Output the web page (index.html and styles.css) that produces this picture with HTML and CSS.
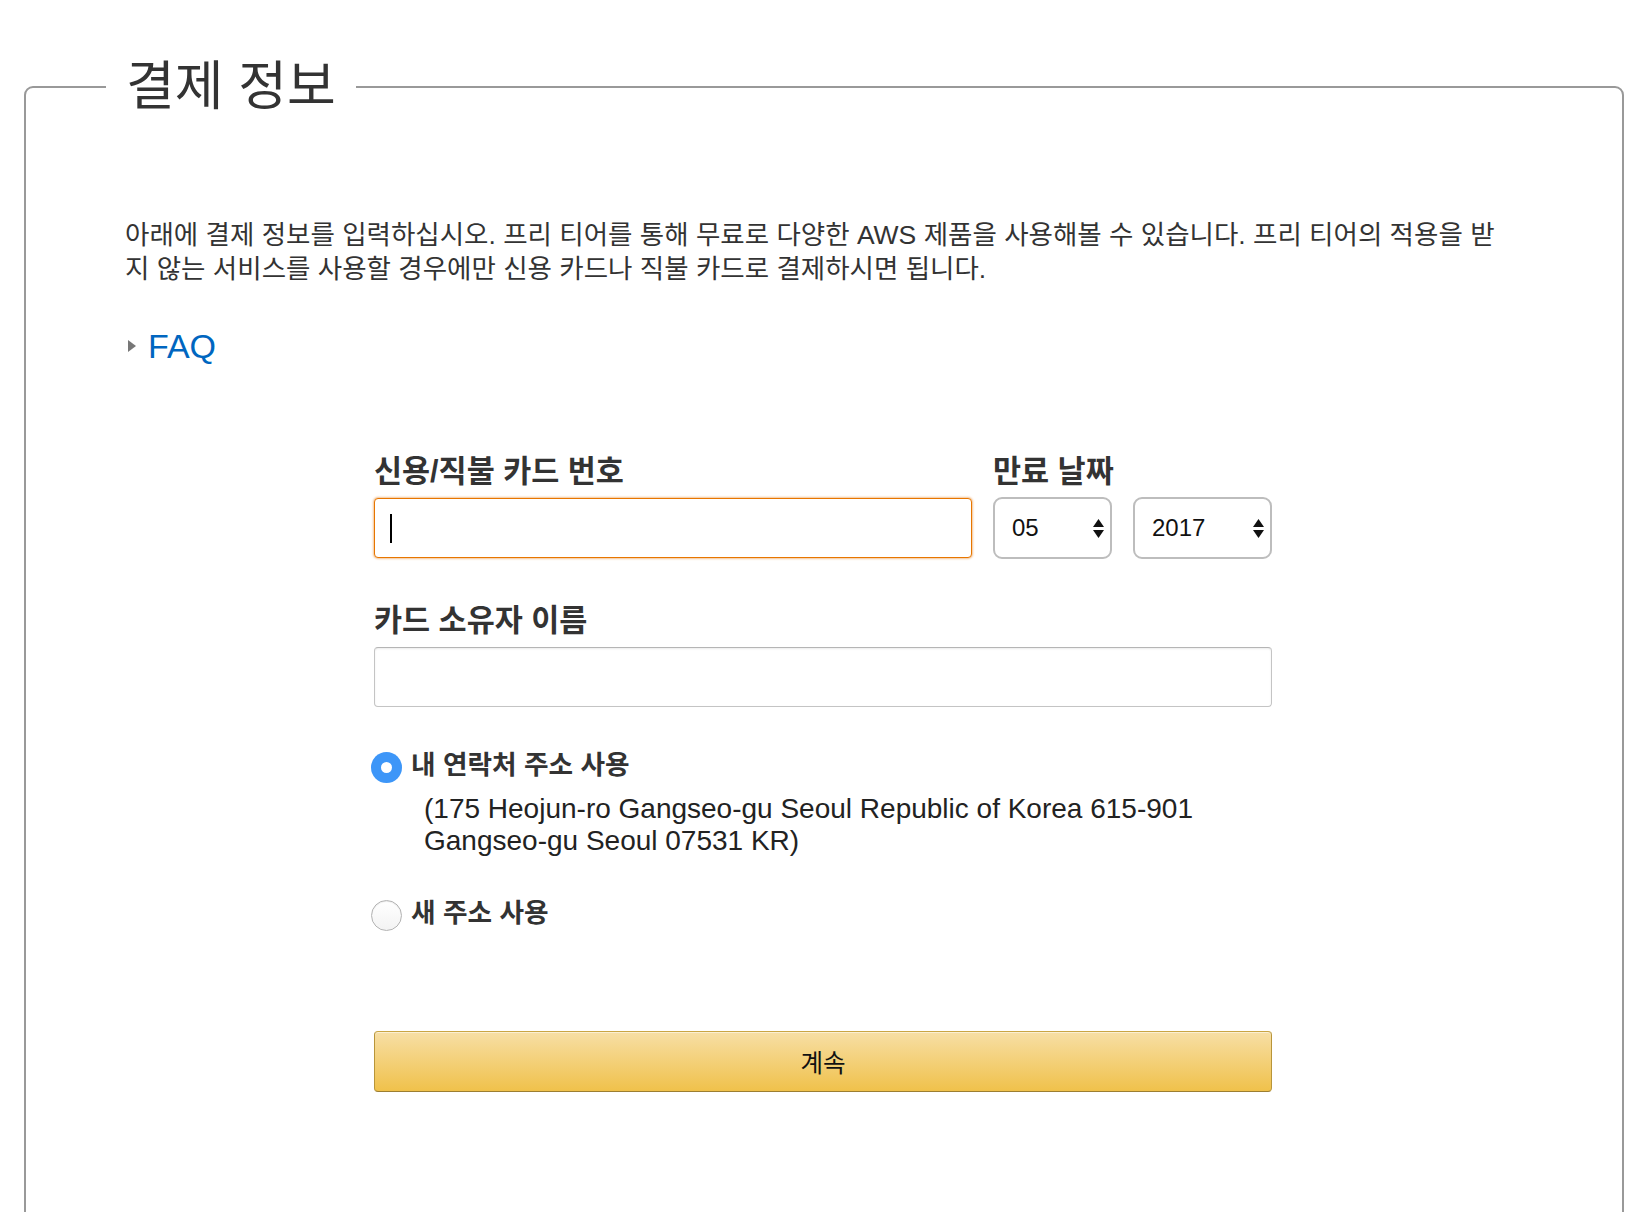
FILE: index.html
```html
<!DOCTYPE html>
<html lang="ko">
<head>
<meta charset="utf-8">
<title>결제 정보</title>
<link rel="stylesheet" href="styles.css">
</head>
<body>
<fieldset class="panel">
  <legend class="panel-title">결제 정보</legend>
  <div class="panel-body">
    <p class="intro">아래에 결제 정보를 입력하십시오. 프리 티어를 통해 무료로 다양한 AWS 제품을 사용해볼 수 있습니다. 프리 티어의 적용을 받지 않는 서비스를 사용할 경우에만 신용 카드나 직불 카드로 결제하시면 됩니다.</p>
    <div class="faq"><span class="faq-arrow"></span><a class="faq-link" href="#">FAQ</a></div>
    <form class="pay-form">
      <div class="row">
        <div class="card-field">
          <div class="field-label">신용/직불 카드 번호</div>
          <div class="text-input is-focused"><span class="caret"></span></div>
        </div>
        <div class="date-field">
          <div class="field-label">만료 날짜</div>
          <div class="selects">
            <div class="select select-month"><span class="select-value">05</span><svg class="updown" width="11" height="19" viewBox="0 0 11 19"><polygon points="0,8 5.5,0 11,8" fill="#111"/><polygon points="0,11 11,11 5.5,19" fill="#111"/></svg></div>
            <div class="select select-year"><span class="select-value">2017</span><svg class="updown" width="11" height="19" viewBox="0 0 11 19"><polygon points="0,8 5.5,0 11,8" fill="#111"/><polygon points="0,11 11,11 5.5,19" fill="#111"/></svg></div>
          </div>
        </div>
      </div>
      <div class="name-field">
        <div class="field-label">카드 소유자 이름</div>
        <div class="text-input"></div>
      </div>
      <div class="radio-row first">
        <span class="radio is-checked"><span class="radio-dot"></span></span>
        <span class="radio-label">내 연락처 주소 사용</span>
      </div>
      <p class="address">(175 Heojun-ro Gangseo-gu Seoul Republic of Korea 615-901 Gangseo-gu Seoul 07531 KR)</p>
      <div class="radio-row second">
        <span class="radio"></span>
        <span class="radio-label">새 주소 사용</span>
      </div>
      <button type="button" class="continue">계속</button>
    </form>
  </div>
</fieldset>
</body>
</html>
```

FILE: styles.css
```css
html, body {
  margin: 0;
  padding: 0;
  background: #fff;
}
body {
  font-family: "Liberation Sans", "Noto Sans CJK KR", sans-serif;
  color: #333;
}
.panel {
  margin: 57px 12px 0 24px;
  padding: 0 0 200px 0;
  border: 2px solid #999;
  border-radius: 9px;
  min-width: 0;
}
.panel-title {
  margin-left: 80px;
  padding: 0 20px 0 20px;
  font-size: 53px;
  line-height: 60px;
  font-weight: 400;
  color: #333;
}
.panel-body {
  padding-left: 99px;
}
.intro {
  margin: 101px 0 0 0;
  max-width: 1378px;
  font-size: 26.5px;
  line-height: 34px;
  color: #333;
}
.faq {
  margin-top: 39px;
  display: flex;
  align-items: center;
  height: 42px;
}
.faq-arrow {
  width: 0;
  height: 0;
  border-top: 6px solid transparent;
  border-bottom: 6px solid transparent;
  border-left: 8px solid #777;
  margin-left: 3px;
  margin-right: 12px;
}
.faq-link {
  font-size: 34px;
  line-height: 42px;
  color: #0066c0;
  text-decoration: none;
}
.pay-form {
  margin: 86px 0 0 249px;
  width: 898px;
}
.row {
  display: flex;
  gap: 21px;
}
.card-field {
  width: 598px;
}
.field-label {
  font-size: 30.5px;
  line-height: 36px;
  font-weight: 700;
  color: #333;
}
.text-input {
  box-sizing: border-box;
  margin-top: 9px;
  height: 60px;
  border: 1px solid #c4c4c4;
  border-top-color: #b5b5b5;
  border-radius: 4px;
  box-shadow: inset 0 1px 2px rgba(0, 0, 0, 0.08);
  background: #fff;
  display: flex;
  align-items: center;
  padding-left: 15px;
}
.text-input.is-focused {
  border: 1px solid #e77600;
  box-shadow: 0 0 2px 1px rgba(228, 121, 17, 0.45);
}
.caret {
  width: 2px;
  height: 29px;
  background: #000;
}
.selects {
  display: flex;
  gap: 21px;
  margin-top: 8px;
}
.select {
  box-sizing: border-box;
  height: 62px;
  border: 2px solid #bdbdbd;
  border-radius: 9px;
  background: #fff;
  display: flex;
  align-items: center;
  justify-content: space-between;
  padding: 0 6px 0 17px;
  font-size: 24px;
  color: #111;
}
.select-month {
  width: 119px;
}
.select-year {
  width: 139px;
}
.name-field {
  margin-top: 43px;
}
.name-field .text-input {
  margin-top: 9px;
}
.radio-row {
  display: flex;
  align-items: center;
  height: 36px;
}
.radio-row.first {
  margin-top: 40px;
}
.radio-row.second {
  margin-top: 38px;
}
.radio {
  box-sizing: border-box;
  width: 31px;
  height: 31px;
  border-radius: 50%;
  margin-left: -3px;
  margin-right: 9px;
  margin-top: 4px;
  border: 1px solid #b3b3b3;
  background: linear-gradient(#ffffff, #f3f3f3);
  box-shadow: inset 0 1px 1px rgba(0, 0, 0, 0.08);
  display: flex;
  align-items: center;
  justify-content: center;
}
.radio.is-checked {
  border: none;
  background: #3d96f8;
  box-shadow: none;
}
.radio-dot {
  width: 11px;
  height: 11px;
  border-radius: 50%;
  background: #fff;
}
.radio-label {
  font-size: 26.7px;
  line-height: 36px;
  font-weight: 700;
  color: #333;
}
.address {
  margin: 10px 0 0 0;
  padding-left: 50px;
  font-size: 28px;
  line-height: 32px;
  color: #222;
}
.continue {
  display: block;
  box-sizing: border-box;
  margin-top: 100px;
  width: 898px;
  height: 61px;
  border: 1px solid #a88734;
  border-color: #c9a544 #b8953a #9c7e31;
  border-radius: 4px;
  background: linear-gradient(#f7dfa5, #f0c14b);
  box-shadow: inset 0 1px 0 rgba(255, 255, 255, 0.5);
  font-family: "Liberation Sans", "Noto Sans CJK KR", sans-serif;
  font-size: 24.5px;
  color: #111;
  cursor: pointer;
}
```
